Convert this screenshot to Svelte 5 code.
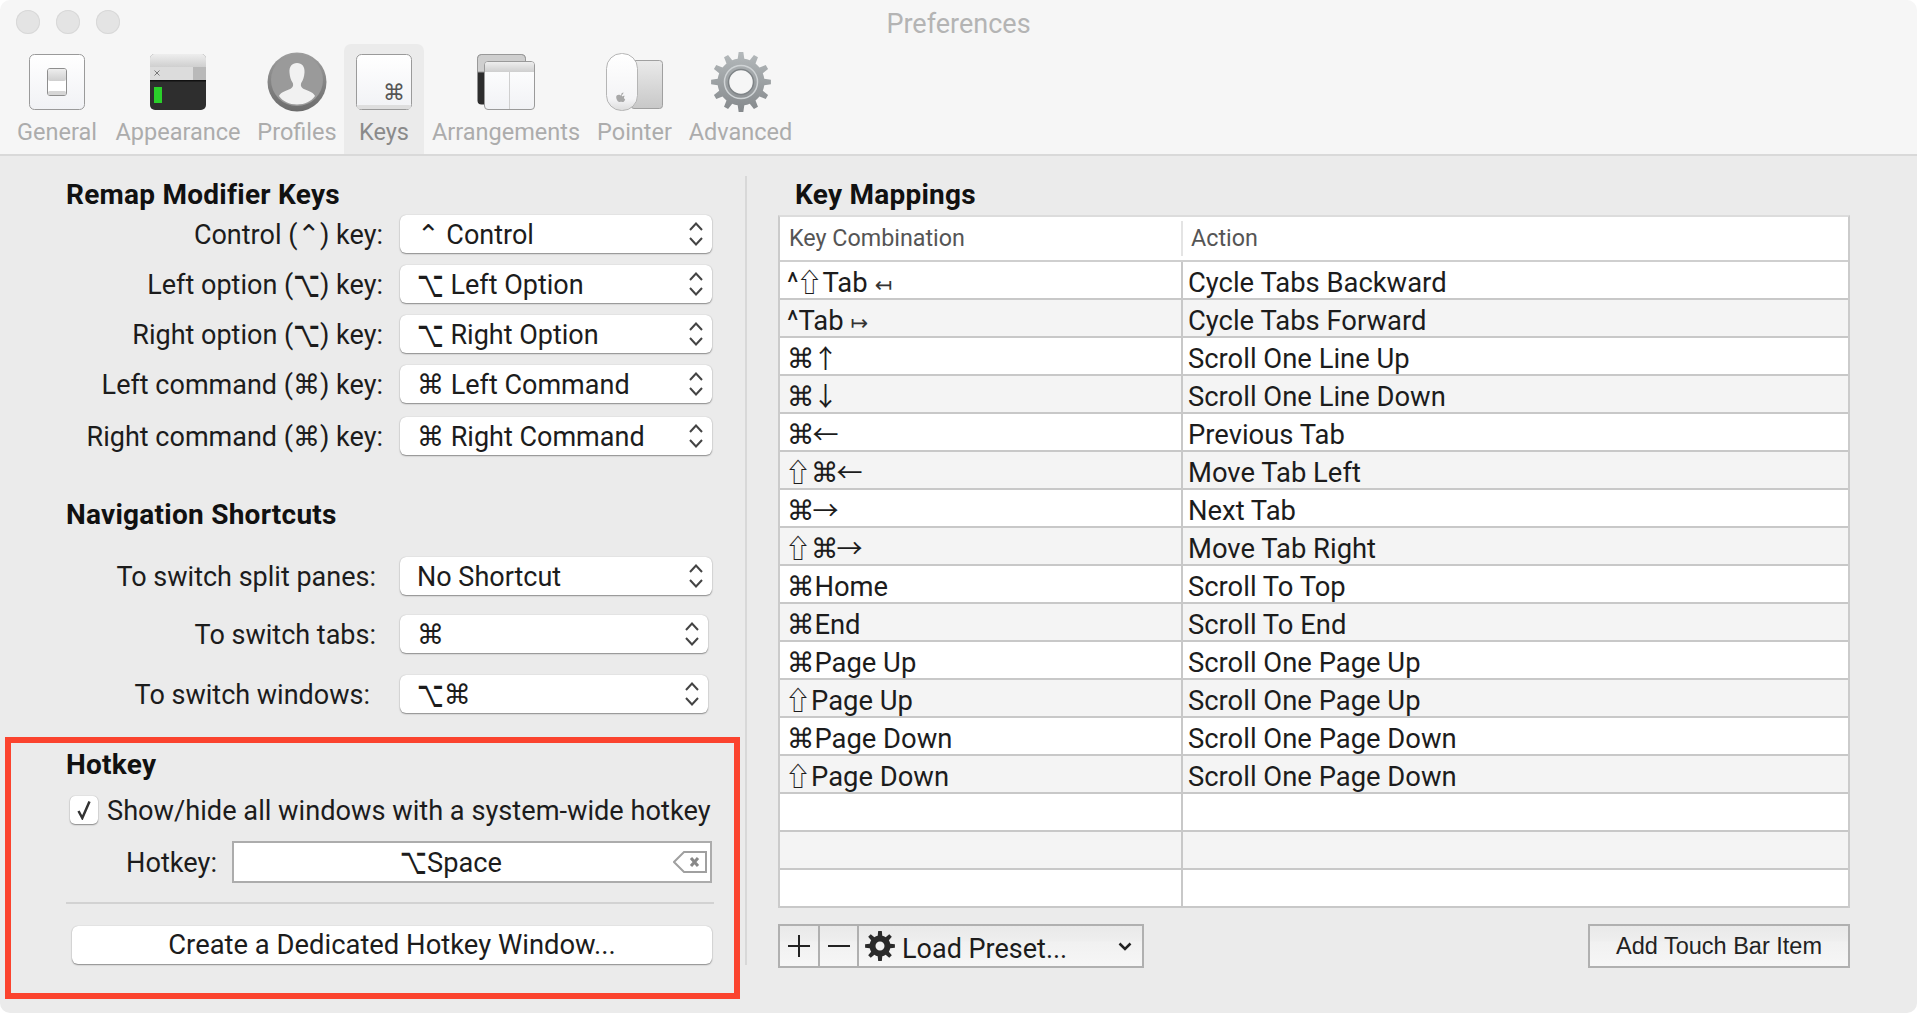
<script>
  const tabs = [
    { id: 'general', label: 'General' },
    { id: 'appearance', label: 'Appearance' },
    { id: 'profiles', label: 'Profiles' },
    { id: 'keys', label: 'Keys' },
    { id: 'arrangements', label: 'Arrangements' },
    { id: 'pointer', label: 'Pointer' },
    { id: 'advanced', label: 'Advanced' }
  ];

  const remap = [
    { label: 'Control (⌃) key:', value: '⌃ Control', cls: 'tight' },
    { label: 'Left option (⌥) key:', value: '⌥ Left Option', cls: 'tight' },
    { label: 'Right option (⌥) key:', value: '⌥ Right Option', cls: 'tight' },
    { label: 'Left command (⌘) key:', value: '⌘ Left Command', cls: 'tight' },
    { label: 'Right command (⌘) key:', value: '⌘ Right Command', cls: 'tight last' }
  ];

  const nav = [
    { label: 'To switch split panes:', value: 'No Shortcut', cls: 'mid' },
    { label: 'To switch tabs:', value: '⌘', cls: 'mid narrow' },
    { label: 'To switch windows:', value: '⌥⌘', cls: 'wide narrow' }
  ];

  const mappings = [
    ['^⇧Tab', 'Cycle Tabs Backward', '↤'],
    ['^Tab', 'Cycle Tabs Forward', '↦'],
    ['⌘↑', 'Scroll One Line Up'],
    ['⌘↓', 'Scroll One Line Down'],
    ['⌘←', 'Previous Tab'],
    ['⇧⌘←', 'Move Tab Left'],
    ['⌘→', 'Next Tab'],
    ['⇧⌘→', 'Move Tab Right'],
    ['⌘Home', 'Scroll To Top'],
    ['⌘End', 'Scroll To End'],
    ['⌘Page Up', 'Scroll One Page Up'],
    ['⇧Page Up', 'Scroll One Page Up'],
    ['⌘Page Down', 'Scroll One Page Down'],
    ['⇧Page Down', 'Scroll One Page Down'],
    ['', ''],
    ['', ''],
    ['', '']
  ];

  // the mac key symbols need their own font handling
  function pieces(text) {
    return text.split(/([⌥⇧↑↓←→])/).filter(Boolean);
  }

  // toothed outline for the gear icons
  function gearPath(cx, cy, teeth, outer, root, spread) {
    const step = (Math.PI * 2) / teeth;
    let d = '';
    for (let i = 0; i < teeth; i++) {
      const a = i * step - Math.PI / 2;
      const pts = [
        [root, a - step * 0.5],
        [root, a - step * spread],
        [outer, a - step * spread * 0.55],
        [outer, a + step * spread * 0.55],
        [root, a + step * spread]
      ];
      for (const [r, t] of pts) {
        d += (d ? 'L' : 'M') + (cx + r * Math.cos(t)).toFixed(2) + ' ' + (cy + r * Math.sin(t)).toFixed(2);
      }
    }
    return d + 'Z';
  }

  const bigGear = gearPath(30, 30, 12, 30, 23.5, 0.27);
  const smallGear = gearPath(15, 15, 8, 15, 10.5, 0.28);
</script>

{#snippet keys(text)}
  {#each pieces(text) as p}
    {#if p === '⌥'}<span class="opt">{p}</span>{:else if '⇧↑↓←→'.includes(p)}<span class="sym">{p}</span>{:else}{p}{/if}
  {/each}
{/snippet}

{#snippet updown()}
  <svg class="updown" width="16" height="26" viewBox="0 0 16 26">
    <path d="M2 9 L8 2.5 L14 9 M2 17 L8 23.5 L14 17" />
  </svg>
{/snippet}

{#snippet prefRow(row)}
  <div class="pref-row {row.cls}">
    <span class="pref-label">{@render keys(row.label)}</span>
    <div class="select">
      <span class="nudge">{@render keys(row.value)}</span>
      {@render updown()}
    </div>
  </div>
{/snippet}

<div class="window">
  <header class="toolbar">
    <div class="titlebar">
      <div class="lights"><i></i><i></i><i></i></div>
      <div class="title">Preferences</div>
    </div>
    <nav class="tabs">
      {#each tabs as tab}
        <div class="tab" class:active={tab.id === 'keys'}>
          <svg class="tab-icon" width="60" height="60" viewBox="0 0 60 60">
            {#if tab.id === 'general'}
              <rect x="2.5" y="2.5" width="55" height="55" rx="5" fill="url(#paper)" stroke="#9a9a9a" />
              <rect x="20.5" y="16.5" width="19" height="27" rx="2.5" fill="#fff" stroke="#8e8e8e" />
              <rect x="21" y="17" width="18" height="12" rx="2" fill="url(#band)" />
              <rect x="21" y="39" width="18" height="4" rx="1.5" fill="#d6d6d6" />
            {:else if tab.id === 'appearance'}
              <rect x="2" y="2" width="56" height="56" rx="5" fill="#2e2e2e" />
              <path d="M2 28V7a5 5 0 0 1 5-5h46a5 5 0 0 1 5 5v21Z" fill="#dcdcdc" />
              <path d="M2 15V7a5 5 0 0 1 5-5h46a5 5 0 0 1 5 5v8Z" fill="url(#band)" />
              <rect x="45" y="15" width="13" height="13" fill="#b9b9b9" />
              <path d="M6.5 18.5l5 5m0-5l-5 5" stroke="#777" fill="none" />
              <rect x="2" y="28" width="56" height="1.5" fill="#111" />
              <rect x="6" y="35" width="8" height="16" fill="#2ad02a" />
            {:else if tab.id === 'profiles'}
              <circle cx="30" cy="30" r="29.5" fill="url(#disc)" />
              <circle cx="30" cy="28" r="26" fill="#9a9a9a" />
              <path d="M30 11c5 0 8 3.600 7.500 9.500-.3 4-1.300 7.500-3.300 10.500-.8 2.700-.2 4.800 3.300 6.300 5 2 9.500 3.800 10.500 6.700-4 5.500-10 8.500-18 8.500s-14-3-18-8.500c1-2.900 5.500-4.700 10.500-6.700 3.500-1.500 4.100-3.600 3.300-6.300-2-3-3-6.500-3.300-10.500-.5-5.900 2.500-9.500 7.500-9.500Z" fill="#f1f1f1" />
            {:else if tab.id === 'keys'}
              <rect x="2.500" y="2.500" width="55" height="55" rx="5" fill="url(#paper)" stroke="#9a9a9a" />
              <rect x="3" y="53" width="54" height="4" rx="2" fill="#dedede" />
              <text x="40" y="47.500" class="key-glyph" text-anchor="middle">⌘</text>
            {:else if tab.id === 'arrangements'}
              <rect x="1.500" y="2.500" width="48" height="50" rx="4" fill="#2d2d2d" />
              <path d="M1.500 20V6.500a4 4 0 0 1 4-4h40a4 4 0 0 1 4 4V20Z" fill="#cfcfcf" stroke="#999" />
              <rect x="8.500" y="9.500" width="50" height="48" rx="3.500" fill="url(#paper)" stroke="#9a9a9a" />
              <path d="M9 20v-7a3 3 0 0 1 3-3h43a3 3 0 0 1 3 3v7Z" fill="url(#band)" />
              <path d="M33.500 20v37" stroke="#cfcfcf" />
            {:else if tab.id === 'pointer'}
              <rect x="26" y="8.500" width="31.500" height="48" rx="3" fill="url(#pad)" stroke="#a0a0a0" />
              <rect x="1.500" y="1.500" width="31" height="57" rx="15" fill="url(#mouse)" stroke="#b5b5b5" />
              <path d="M17 44.500c1-.6 2.200-1 2.800-.4-1.400 1-1 2.800.4 3.400-.6 1.400-1.400 2.600-2.400 2.600-.8 0-1-.4-1.800-.4s-1 .4-1.800.4c-1.400 0-3-3-3-5 0-2.400 2.800-2.800 3.800-2 .6.400 1 .400 2 0ZM16.500 41.500c.8-.8 1.800-1 2-1 0 1.200-1 2.500-2.300 2.400 0-.5 0-1 .3-1.400Z" fill="#a8a8a8" />
            {:else if tab.id === 'advanced'}
              <path d={bigGear} fill="url(#steel)" />
              <circle cx="30" cy="30" r="16.500" fill="none" stroke="#cfd3d5" stroke-width="1.500" />
              <circle cx="30" cy="30" r="12.500" fill="#f6f6f6" stroke="#7f8487" stroke-width="1.500" />
            {/if}
          </svg>
          <span class="tab-label">{tab.label}</span>
        </div>
      {/each}
    </nav>
    <svg class="defs" width="0" height="0">
      <defs>
        <linearGradient id="paper" x1="0" y1="0" x2="0" y2="1"><stop offset="0" stop-color="#fff" /><stop offset="1" stop-color="#f1f2f5" /></linearGradient>
        <linearGradient id="band" x1="0" y1="0" x2="0" y2="1"><stop offset="0" stop-color="#eeeeee" /><stop offset="1" stop-color="#cfcfcf" /></linearGradient>
        <linearGradient id="disc" x1="0" y1="0" x2="0" y2="1"><stop offset="0" stop-color="#9e9e9e" /><stop offset="1" stop-color="#6c6c6c" /></linearGradient>
        <linearGradient id="pad" x1="0" y1="0" x2="0" y2="1"><stop offset="0" stop-color="#eaeaea" /><stop offset="1" stop-color="#c8c8c8" /></linearGradient>
        <linearGradient id="mouse" x1="0" y1="0" x2="0" y2="1"><stop offset="0" stop-color="#fff" /><stop offset="0.8" stop-color="#f4f4f6" /><stop offset="1" stop-color="#dcdcdc" /></linearGradient>
        <linearGradient id="steel" x1="0" y1="0" x2="0" y2="1"><stop offset="0" stop-color="#b4b9bb" /><stop offset="1" stop-color="#85898c" /></linearGradient>
      </defs>
    </svg>
  </header>

  <main class="body">
    <section class="left">
      <h2>Remap Modifier Keys</h2>
      <div class="rows">
        {#each remap as row}
          {@render prefRow(row)}
        {/each}
      </div>

      <h2 class="nav-head">Navigation Shortcuts</h2>
      <div class="rows nav-rows">
        {#each nav as row}
          {@render prefRow(row)}
        {/each}
      </div>

      <div class="hotkey">
        <h2>Hotkey</h2>
        <label class="check-row">
          <span class="checkbox">
            <svg width="16" height="20" viewBox="0 0 16 20"><path d="M2.500 11l3.800 7L13.500 1.500" /></svg>
          </span>
          <span class="nudge">Show/hide all windows with a system-wide hotkey</span>
        </label>
        <div class="hotkey-row">
          <span class="nudge">Hotkey:</span>
          <div class="hotkey-field">
            <span class="nudge">{@render keys('⌥Space')}</span>
            <svg class="clear" width="34" height="24" viewBox="0 0 34 24">
              <path d="M33 2H11L1 12l10 10h22Z" />
              <path class="x" d="M18 8l7 8m0-8l-7 8" />
            </svg>
          </div>
        </div>
        <hr />
        <button class="wide-btn">Create a Dedicated Hotkey Window...</button>
      </div>
    </section>

    <section class="right">
      <h2>Key Mappings</h2>
      <div class="table">
        <div class="thead">
          <span class="c1">Key Combination</span>
          <span class="c2">Action</span>
        </div>
        {#each mappings as m, i}
          <div class="tr" class:odd={i % 2 === 1}>
            <span class="c1">{@render keys(m[0])}{#if m[2]}<small>{m[2]}</small>{/if}</span>
            <span class="c2">{m[1]}</span>
          </div>
        {/each}
      </div>
      <div class="controls">
        <div class="seg">
          <div class="seg-btn add">
            <svg width="22" height="22" viewBox="0 0 22 22"><path d="M11 0v22M0 11h22" /></svg>
          </div>
          <div class="seg-btn remove">
            <svg width="22" height="22" viewBox="0 0 22 22"><path d="M0 11h22" /></svg>
          </div>
          <div class="seg-btn preset">
            <svg class="cog" width="30" height="30" viewBox="0 0 30 30">
              <path fill-rule="evenodd" d="{smallGear} M15 10.500a4.500 4.500 0 1 0 0 9a4.500 4.500 0 1 0 0-9Z" />
            </svg>
            <span class="preset-text">Load Preset...</span>
            <svg class="chev" width="14" height="9" viewBox="0 0 14 9"><path d="M1.500 1.500L7 7l5.500-5.500" /></svg>
          </div>
        </div>
        <button class="touch-btn">Add Touch Bar Item</button>
      </div>
    </section>
  </main>
</div>

<style>
  :global(body) {
    margin: 0;
    background: #fff;
  }

  .window {
    width: 1917px;
    height: 1013px;
    display: flex;
    flex-direction: column;
    border-radius: 10px;
    overflow: hidden;
    font-family: Roboto, "DejaVu Sans", sans-serif;
    color: #1c1c1c;
  }

  .opt {
    display: inline-block;
    font-family: "DejaVu Sans", sans-serif;
    font-size: 0.86em;
    line-height: 1;
    transform: scaleY(1.6);
    transform-origin: 50% 68%;
  }

  .sym {
    margin-left: -2px;
    font-family: "Noto Sans CJK JP", "DejaVu Sans", sans-serif;
    font-size: 0.95em;
    line-height: 1;
  }

  .nudge {
    padding-top: 2px;
  }

  .toolbar {
    height: 154px;
    background: #f6f6f6;
    border-bottom: 2px solid #d9d9d9;
    flex: none;
  }

  .titlebar {
    height: 44px;
    display: flex;
    align-items: center;
    position: relative;
  }

  .lights {
    display: flex;
    gap: 16px;
    padding-left: 16px;
  }

  .lights i {
    width: 24px;
    height: 24px;
    border-radius: 50%;
    background: #e4e4e4;
    box-shadow: inset 0 0 0 1px #d8d8d8;
  }

  .title {
    position: absolute;
    left: 0;
    right: 0;
    top: 8px;
    text-align: center;
    font-size: 27px;
    line-height: 32px;
    color: #b4b4b4;
  }

  .tabs {
    display: grid;
    grid-template-columns: 98px 144px 94px 80px 164px 93px 119px;
    padding-left: 8px;
    height: 110px;
  }

  .tab {
    display: flex;
    flex-direction: column;
    align-items: center;
    padding-top: 8px;
    border-radius: 7px 7px 0 0;
  }

  .tab.active {
    background: #ebebeb;
  }

  .tab-icon {
    display: block;
    flex: none;
  }

  .tab-label {
    margin-top: 6px;
    font-size: 23.500px;
    line-height: 28px;
    color: #acacac;
  }

  .active .tab-label {
    color: #8a8a8a;
  }

  .key-glyph {
    font-family: "DejaVu Sans", sans-serif;
    font-size: 22px;
    fill: #555;
  }

  .defs {
    position: absolute;
  }

  .body {
    flex: 1;
    display: flex;
    background: #ebebeb;
    min-height: 0;
  }

  h2 {
    margin: 0;
    font-size: 28px;
    line-height: 30px;
    font-weight: 700;
    letter-spacing: 0.25px;
    color: #111;
  }

  .left {
    width: 745px;
    flex: none;
    padding-top: 24px;
    box-sizing: border-box;
  }

  .left > h2 {
    padding-left: 66px;
  }

  .rows {
    display: flex;
    flex-direction: column;
    gap: 12px;
    margin-top: 5px;
    width: 712px;
  }

  .pref-row {
    display: flex;
    justify-content: flex-end;
    align-items: center;
    height: 38px;
    font-size: 27px;
    line-height: 32px;
  }

  .pref-row.last {
    margin-top: 2px;
  }

  .pref-label {
    flex: 1;
    padding-top: 2px;
    text-align: right;
    white-space: nowrap;
  }

  .tight .pref-label {
    padding-right: 17px;
  }

  .mid .pref-label {
    padding-right: 24px;
  }

  .wide .pref-label {
    padding-right: 30px;
  }

  .select {
    width: 312px;
    height: 38px;
    flex: none;
    box-sizing: border-box;
    display: flex;
    align-items: center;
    justify-content: space-between;
    padding: 0 8px 0 17px;
    background: #fff;
    border-radius: 6px;
    box-shadow: 0 1px 1.500px rgba(0, 0, 0, 0.4), 0 0 1px rgba(0, 0, 0, 0.25);
  }

  .narrow {
    margin-right: 4px;
  }

  .narrow .select {
    width: 308px;
  }

  .updown path {
    fill: none;
    stroke: #444;
    stroke-width: 2;
  }

  .nav-head {
    margin-top: 45px;
  }

  .nav-rows {
    margin-top: 27px;
    gap: 20px;
  }

  .nav-rows .wide {
    margin-top: 2px;
  }

  .hotkey {
    margin: 24px 0 0 5px;
    width: 735px;
    height: 262px;
    box-sizing: border-box;
    border: 6px solid #fb432e;
    padding: 7px 22px 0 55px;
    font-size: 27.200px;
    line-height: 32px;
  }

  .check-row {
    display: flex;
    align-items: center;
    gap: 9px;
    height: 28px;
    margin: 16px 0 0 4px;
    white-space: nowrap;
  }

  .checkbox {
    width: 28px;
    height: 28px;
    box-sizing: border-box;
    flex: none;
    display: flex;
    align-items: center;
    justify-content: center;
    background: #fff;
    border-radius: 5px;
    box-shadow: 0 1px 1.500px rgba(0, 0, 0, 0.4), 0 0 1px rgba(0, 0, 0, 0.3);
  }

  .checkbox path {
    fill: none;
    stroke: #333;
    stroke-width: 2.500;
  }

  .hotkey-row {
    display: flex;
    align-items: center;
    gap: 15px;
    margin-top: 17px;
    justify-content: flex-end;
  }

  .hotkey-row > span {
    white-space: nowrap;
  }

  .hotkey-field {
    width: 480px;
    height: 42px;
    box-sizing: border-box;
    flex: none;
    position: relative;
    display: flex;
    align-items: center;
    justify-content: center;
    background: #fff;
    border: 2px solid #acacac;
    padding-right: 42px;
  }

  .clear {
    position: absolute;
    right: 3px;
    top: 7px;
  }

  .clear path {
    fill: none;
    stroke: #a0a0a0;
    stroke-width: 2;
  }

  .clear .x {
    stroke: #888;
    stroke-width: 3;
  }

  hr {
    margin: 19px -2px 0 0;
    border: 0;
    height: 2px;
    background: #d2d2d2;
  }

  .wide-btn {
    display: block;
    width: 640px;
    height: 38px;
    margin: 22px 0 0 6px;
    padding: 0;
    border: 0;
    border-radius: 6px;
    background: #fff;
    color: inherit;
    font: inherit;
    font-size: 27.400px;
    box-shadow: 0 1px 1.500px rgba(0, 0, 0, 0.4), 0 0 1px rgba(0, 0, 0, 0.25);
  }

  .right {
    flex: 1;
    padding: 4px 67px 0 31px;
    border-left: 2px solid #d8d8d8;
    margin-top: 20px;
    margin-bottom: 48px;
  }

  .right h2 {
    padding-left: 17px;
    margin-bottom: 5px;
  }

  .table {
    border: 2px solid #cbcbcb;
    border-top-color: #dcdcdc;
    border-bottom: 0;
    background: #fff;
    font-size: 27.400px;
  }

  .thead,
  .tr {
    display: grid;
    grid-template-columns: 401px 1fr;
  }

  .thead {
    height: 43px;
    border-bottom: 2px solid #cfcfcf;
    color: #555;
    font-size: 23.300px;
    line-height: 42px;
  }

  .thead .c1 {
    padding-left: 9px;
  }

  .thead .c2 {
    border-left: 2px solid #e4e4e4;
    margin: 4px 0 6px;
    line-height: 35px;
    padding-left: 8px;
  }

  .tr {
    height: 38px;
    box-sizing: border-box;
    grid-template-rows: 36px;
    border-bottom: 2px solid #c8c8c8;
    line-height: 43px;
    white-space: nowrap;
  }

  .tr.odd {
    background: #f4f4f4;
  }

  .tr .c1 {
    padding-left: 7px;
  }

  .tr .c2 {
    border-left: 2px solid #c8c8c8;
    padding-left: 5px;
  }

  .tr small {
    margin-left: 7px;
    font-size: 21px;
    line-height: 1;
    font-family: "DejaVu Sans", sans-serif;
    color: #333;
  }

  .controls {
    display: flex;
    justify-content: space-between;
    margin-top: 16px;
  }

  .seg {
    display: flex;
    width: 366px;
    height: 44px;
    box-sizing: border-box;
    border: 2px solid #b0b0b0;
    background: linear-gradient(#e9e9e9 0%, #eeeeee 35%, #f1f1f1 40%, #f6f6f6 100%);
  }

  .seg-btn {
    display: flex;
    align-items: center;
    justify-content: center;
    flex: none;
    border-right: 2px solid #b0b0b0;
  }

  .seg-btn svg path {
    stroke: #222;
    stroke-width: 2;
    fill: none;
  }

  .add {
    width: 38px;
  }

  .remove {
    width: 37px;
  }

  .preset {
    flex: 1;
    border-right: 0;
    justify-content: flex-start;
    padding-left: 6px;
    font-size: 27px;
    gap: 7px;
  }

  .preset-text {
    padding-top: 5px;
  }

  .seg-btn .cog path {
    fill: #2a2a2a;
    stroke: none;
  }

  .seg-btn .chev {
    margin-left: auto;
    margin-right: 10px;
  }

  .seg-btn .chev path {
    stroke-width: 2.500;
  }

  .touch-btn {
    width: 262px;
    height: 44px;
    padding: 0;
    border: 2px solid #b0b0b0;
    background: linear-gradient(#e9e9e9 0%, #eeeeee 35%, #f1f1f1 40%, #f6f6f6 100%);
    font-family: "Liberation Sans", sans-serif;
    font-size: 23.500px;
    color: #222;
  }
</style>
